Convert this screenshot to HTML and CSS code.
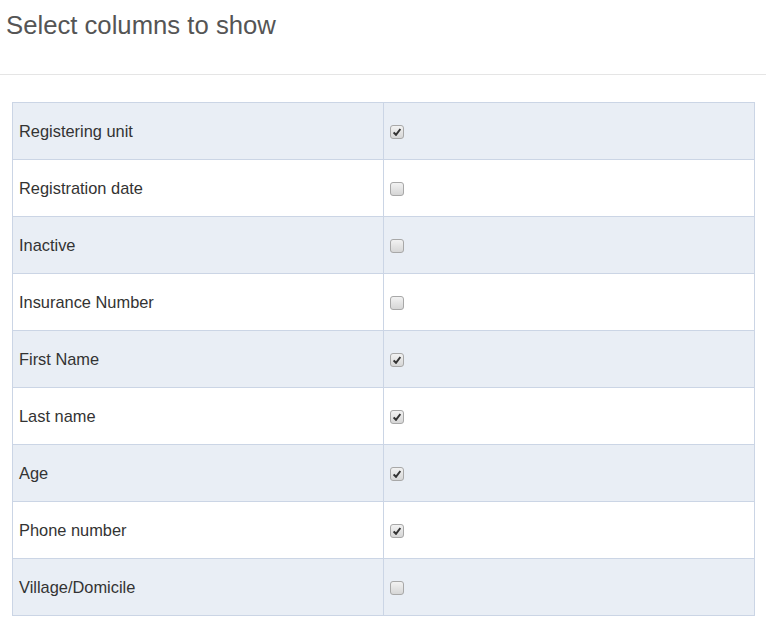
FILE: index.html
```html
<!DOCTYPE html>
<html>
<head>
<meta charset="utf-8">
<link rel="stylesheet" href="styles.css">
</head>
<body>
<div class="header">
  <h1 class="title">Select columns to show</h1>
</div>
<div class="body">
  <table class="cols">
    <tr class="odd"><td class="name">Registering unit</td><td class="check"><span class="cb checked"></span></td></tr>
    <tr><td class="name">Registration date</td><td class="check"><span class="cb"></span></td></tr>
    <tr class="odd"><td class="name">Inactive</td><td class="check"><span class="cb"></span></td></tr>
    <tr><td class="name">Insurance Number</td><td class="check"><span class="cb"></span></td></tr>
    <tr class="odd"><td class="name">First Name</td><td class="check"><span class="cb checked"></span></td></tr>
    <tr><td class="name">Last name</td><td class="check"><span class="cb checked"></span></td></tr>
    <tr class="odd"><td class="name">Age</td><td class="check"><span class="cb checked"></span></td></tr>
    <tr><td class="name">Phone number</td><td class="check"><span class="cb checked"></span></td></tr>
    <tr class="odd"><td class="name">Village/Domicile</td><td class="check"><span class="cb"></span></td></tr>
  </table>
</div>
</body>
</html>
```
FILE: styles.css
```css
html, body {
  margin: 0;
  padding: 0;
  background: #fff;
  font-family: "Liberation Sans", Arial, sans-serif;
  color: #333;
}
.header {
  height: 74px;
  border-bottom: 1px solid #e5e5e5;
  box-sizing: content-box;
}
.title {
  margin: 0;
  padding: 10px 0 0 6px;
  font-size: 25.7px;
  font-weight: normal;
  line-height: 30px;
  color: #555;
}
.body {
  padding: 27px 0 0 12px;
}
.cols {
  border-collapse: collapse;
  width: 743px;
}
.cols td {
  border: 1px solid #cbd5e5;
  height: 55px;
  padding: 1px 6px 0;
  vertical-align: middle;
  font-size: 16.4px;
}
.cols td.name {
  width: 358px;
}
.cols tr.odd td {
  background: #e9eef5;
}
.cb {
  display: block;
  width: 12px;
  height: 12px;
  border: 1px solid #a8a8a8;
  border-radius: 3px;
  background: linear-gradient(#f2f2f2, #d6d6d6);
  position: relative;
  margin-top: 1px;
}
.cb.checked::after {
  content: "";
  position: absolute;
  left: 2px;
  top: 2px;
  width: 8px;
  height: 8px;
  background: no-repeat center/8px 8px url("data:image/svg+xml;utf8,<svg xmlns='http://www.w3.org/2000/svg' viewBox='0 0 8 8'><path d='M0.6 4.4 L3 6.8 L7.4 1' fill='none' stroke='%23333' stroke-width='2'/></svg>");
}
```
